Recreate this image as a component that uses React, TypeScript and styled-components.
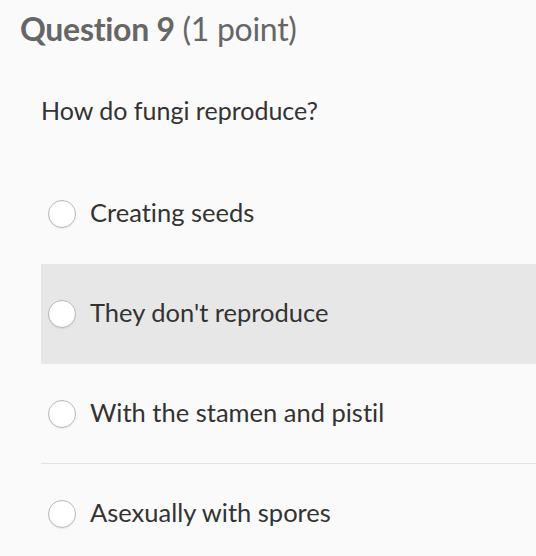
import styled, { createGlobalStyle } from "styled-components";

const GlobalStyle = createGlobalStyle`
  html, body {
    margin: 0;
    padding: 0;
    background: #fafafa;
  }
`;

// Contenedor general de la pregunta
const Page = styled.div`
  width: 536px;
  height: 556px;
  overflow: hidden;
  background: #fafafa;
  font-family: "Lato", "Open Sans", sans-serif;
  font-variant-ligatures: none;
  color: #333;
`;

const Title = styled.h2`
  margin: 0;
  padding: 9px 0 0 20px;
  height: 39px;
  font-size: 32px;
  font-weight: 400;
  color: #666;
  line-height: 39px;
  letter-spacing: -0.3px;

  strong {
    font-weight: 700;
  }
`;

const Body = styled.div`
  margin-left: 41px;
`;

const Prompt = styled.p`
  margin: 0;
  padding-top: 47px;
  height: 69px;
  font-size: 25px;
  line-height: 30px;
  color: #333;
`;

const Options = styled.div`
  display: flex;
  flex-direction: column;
`;

// Fila de opción
const OptionRow = styled.label<{ $hover?: boolean; $divider?: boolean }>`
  box-sizing: border-box;
  display: flex;
  align-items: center;
  gap: 14px;
  height: 100px;
  padding-left: 7px;
  background: ${({ $hover }) => ($hover ? "#e7e7e7" : "transparent")};
  border-bottom: 1px solid ${({ $divider }) => ($divider ? "#e3e3e3" : "transparent")};
  cursor: pointer;
`;

const Radio = styled.span`
  flex: 0 0 auto;
  width: 26px;
  height: 26px;
  border-radius: 50%;
  border: 1px solid #b9b9b9;
  background: radial-gradient(circle at 50% 40%, #ffffff 60%, #f1f1f1 100%);
  box-shadow: 0 1px 1px rgba(0, 0, 0, 0.08);
`;

const OptionText = styled.span`
  margin-top: -3px;
  font-size: 25.5px;
  line-height: 30px;
  color: #333;
`;

const options = [
  { text: "Creating seeds" },
  { text: "They don't reproduce", hover: true },
  { text: "With the stamen and pistil", divider: true },
  { text: "Asexually with spores" },
];

const App = () => (
  <>
    <GlobalStyle />
    <Page>
      <Title>
        <strong>Question 9</strong> (1 point)
      </Title>
      <Body>
        <Prompt>How do fungi reproduce?</Prompt>
        <Options>
          {options.map((o, i) => (
            <OptionRow key={i} $hover={o.hover} $divider={o.divider}>
              <Radio />
              <OptionText>{o.text}</OptionText>
            </OptionRow>
          ))}
        </Options>
      </Body>
    </Page>
  </>
);

export default App;
